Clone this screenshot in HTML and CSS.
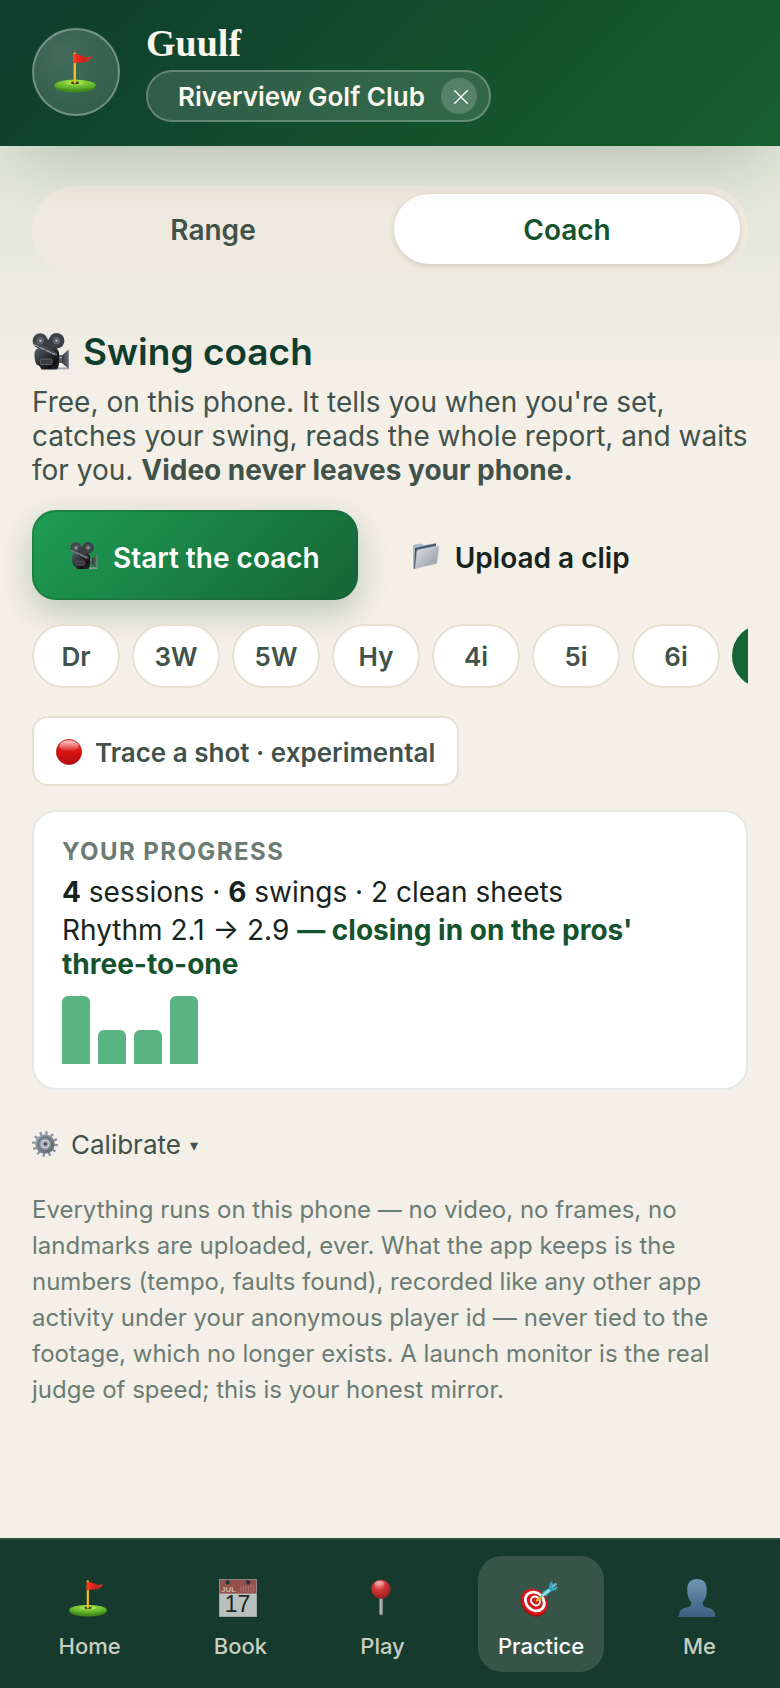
FILE: index.html
```html
<!DOCTYPE html>
<html lang="en">
<head>
    <meta charset="UTF-8">
    <meta name="viewport" content="width=device-width, initial-scale=1.0">
    <title>Guulf</title>
    <link rel="stylesheet" href="styles.css">
</head>
<body>
    <!-- shared icons -->
    <svg class="sprite" aria-hidden="true">
        <defs>
            <linearGradient id="g-flag" x1="0" x2="1">
                <stop offset="0" stop-color="#ff3a24"/>
                <stop offset=".35" stop-color="#e02418"/>
                <stop offset=".6" stop-color="#b52a1c"/>
                <stop offset="1" stop-color="#f02c1c"/>
            </linearGradient>
            <radialGradient id="g-grass" cx=".5" cy=".2" r=".8">
                <stop offset="0" stop-color="#a4e045"/>
                <stop offset=".6" stop-color="#67b92e"/>
                <stop offset="1" stop-color="#3f8a1c"/>
            </radialGradient>
            <linearGradient id="g-cam" x1="0" y1="0" x2="1" y2="1">
                <stop offset="0" stop-color="#56636b"/>
                <stop offset=".4" stop-color="#33363a"/>
                <stop offset=".75" stop-color="#101114"/>
                <stop offset="1" stop-color="#2b2d30"/>
            </linearGradient>
            <linearGradient id="g-lens" x1="0" x2="1">
                <stop offset="0" stop-color="#33363a"/>
                <stop offset="1" stop-color="#646a70"/>
            </linearGradient>
            <linearGradient id="g-folder" x1="0" y1="0" x2="1" y2="1">
                <stop offset="0" stop-color="#dfe3e8"/>
                <stop offset="1" stop-color="#8f959d"/>
            </linearGradient>
            <linearGradient id="g-red" x1="0" y1="0" x2="0" y2="1">
                <stop offset="0" stop-color="#e8504a"/>
                <stop offset=".45" stop-color="#dc1414"/>
                <stop offset="1" stop-color="#b00d0d"/>
            </linearGradient>
            <linearGradient id="g-shine" x1="0" y1="0" x2="0" y2="1">
                <stop offset="0" stop-color="#fff" stop-opacity=".7"/>
                <stop offset="1" stop-color="#fff" stop-opacity="0"/>
            </linearGradient>
            <linearGradient id="g-gear" x1="0" y1="0" x2="1" y2="1">
                <stop offset="0" stop-color="#a3adb8"/>
                <stop offset="1" stop-color="#5d656e"/>
            </linearGradient>
            <radialGradient id="g-pin" cx=".4" cy=".25" r=".8">
                <stop offset="0" stop-color="#f08a84"/>
                <stop offset=".4" stop-color="#cf3636"/>
                <stop offset="1" stop-color="#8f1d1f"/>
            </radialGradient>
            <linearGradient id="g-user" x1="0" y1="0" x2="0" y2="1">
                <stop offset="0" stop-color="#6f96b3"/>
                <stop offset="1" stop-color="#3a5f80"/>
            </linearGradient>
        </defs>

        <symbol id="i-flag" viewBox="0 0 42 42">
            <ellipse cx="21" cy="35.6" rx="20.6" ry="5.8" fill="#3f8a1c"/>
            <ellipse cx="21" cy="34.2" rx="20.6" ry="5.6" fill="url(#g-grass)"/>
            <ellipse cx="21" cy="31.8" rx="9" ry="2.4" fill="#a0dc48"/>
            <ellipse cx="21" cy="31.8" rx="4" ry="1.5" fill="#3d4a18"/>
            <rect x="19.6" y="1.5" width="2.4" height="31" rx="1" fill="#f2c01c"/>
            <path d="M19.6 3q4-.4 8 1.6q5 3 9.7.6q-1.2 5-6 6q-3.3.3-6.7.4q-2.5 0-5 1z" fill="url(#g-flag)"/>
        </symbol>

        <symbol id="i-camera" viewBox="0 0 38 38">
            <path d="M25 34.5h12v1.8H25z" fill="#a2a3b0"/>
            <path d="M26 22h4v8h-4z" fill="#54595e"/>
            <path d="M26 24.5h5" stroke="#a4a9ae" stroke-width="1.2"/>
            <path d="M30 22.5L36 17v18.5L30 30z" fill="url(#g-lens)"/>
            <path d="M36.5 17v18.5" stroke="#85898f"/>
            <path d="M2.5 20Q3 15.5 8 14.5L24 14L27 19V30Q27 34 25 36.5H9.5Q8 32.5 4.5 31.5Q2 27 2.5 20Z" fill="url(#g-cam)"/>
            <circle cx="8.2" cy="7.8" r="7.6" fill="#41464b"/>
            <circle cx="24.6" cy="7.8" r="7.8" fill="#3d4146"/>
            <path d="M8 4q8 5 16.6 0l3 11H12z" fill="#3a3e43"/>
            <circle cx="8.4" cy="7.8" r="3.2" fill="#565c62" stroke="#6f767c" stroke-width=".7"/>
            <circle cx="24.6" cy="7.8" r="3.2" fill="#565c62" stroke="#6f767c" stroke-width=".7"/>
            <circle cx="8.4" cy="7.8" r="1.3" fill="#b4babf"/>
            <circle cx="24.6" cy="7.8" r="1.3" fill="#b4babf"/>
            <path d="M.5 10.5l2.5-1.5L25 20v3.5L21 22z" fill="#4a4f54"/>
            <path d="M1 11.2L23 21.5" stroke="#a2a8ae" stroke-width="1.1" stroke-dasharray="6 1"/>
            <rect x="8.5" y="26" width="11.5" height="5.5" rx="1" fill="#3a3b3e" stroke="#77797c" stroke-width=".7"/>
        </symbol>

        <symbol id="i-folder" viewBox="0 0 28 28">
            <path d="M1 4l1.5-1.5l7-1l2 1.5L24 1v3L4 26.5L1 27z" fill="#aebdca"/>
            <path d="M3 6L24 1.6V8L4 26l-2 1z" fill="#41566a"/>
            <path d="M5 9q0-1 1.2-1.2L26 3.8q1.2-.2 1 1L25 20.5q-.2 1-1.2 1.3L3.2 26.6Z" fill="url(#g-folder)" stroke="#c3c9cf" stroke-width=".6"/>
        </symbol>

        <symbol id="i-dot" viewBox="0 0 26 26">
            <circle cx="13" cy="13" r="12.6" fill="url(#g-red)" stroke="#b51515" stroke-width=".8"/>
            <ellipse cx="13" cy="7" rx="9.5" ry="5.8" fill="url(#g-shine)"/>
        </symbol>

        <symbol id="i-gear" viewBox="0 0 26 26">
            <circle cx="13" cy="13" r="11" fill="none" stroke="#8391a1" stroke-width="3.6" stroke-dasharray="2.2 3.56"/>
            <circle cx="13" cy="13" r="9.8" fill="url(#g-gear)"/>
            <circle cx="13" cy="13" r="7" fill="#868e97" stroke="#596069" stroke-width="1"/>
            <circle cx="13" cy="13" r="4" fill="#a9b1bb" stroke="#d0d6dc" stroke-width="1"/>
            <circle cx="13.5" cy="13" r="1.8" fill="#4c4658"/>
        </symbol>

        <symbol id="i-pin" viewBox="0 0 38 38">
            <path d="M17.3 17h3.6v18.5q-1.8 1.5-3.6 0z" fill="#8f938f"/>
            <path d="M18.3 19h1v16h-1z" fill="#c3c4bf"/>
            <circle cx="19" cy="10.3" r="9.6" fill="url(#g-pin)"/>
            <ellipse cx="17.5" cy="5" rx="5" ry="2.8" fill="url(#g-shine)" opacity=".7"/>
        </symbol>

        <symbol id="i-target" viewBox="0 0 38 38">
            <ellipse cx="13.6" cy="24.5" rx="14.5" ry="11.5" fill="#8f0d10" transform="rotate(45 13.6 24.5)"/>
            <ellipse cx="14.2" cy="23" rx="14.5" ry="12" fill="#d5171b" transform="rotate(45 14.2 23)"/>
            <ellipse cx="14.8" cy="22.5" rx="10.2" ry="8.6" fill="none" stroke="#fff" stroke-width="2.8" transform="rotate(45 14.8 22.5)"/>
            <ellipse cx="15.5" cy="22" rx="4.8" ry="4" fill="#c21a1d" stroke="#fff" stroke-width="2" transform="rotate(45 15.5 22)"/>
            <path d="M16 22l6-4" stroke="#e8b31b" stroke-width="2.4"/>
            <path d="M20 18.5l3.5-6l7-4.5l1.5 3.5l-5.5 5z" fill="#49b9cc"/>
            <path d="M22.5 16.5l7-5.5" stroke="#a4edf2" stroke-width="1.6"/>
            <path d="M29 10.5l.5-6l2.5-2.5l1.5 5l4.5 1.5l-2.5 2.8l-4.5.6z" fill="#36aabd"/>
            <path d="M32.5 7.5l3-3.5M34 7l3-2" stroke="#a9dfe5" stroke-width="1"/>
        </symbol>

        <symbol id="i-user" viewBox="0 0 38 38">
            <path d="M19 0q9.8 0 9.8 11q0 8-4 12q-.8 4.5 3.2 5.2q9.5.8 9.5 9.8H.5q0-9 9.5-9.8q4-.7 3.2-5.2q-4-4-4-12Q9.2 0 19 0z" fill="url(#g-user)"/>
        </symbol>
    </svg>

    <header class="top-bar">
        <div class="crest"><svg><use href="#i-flag"/></svg></div>
        <div class="brand">
            <h1>Guulf</h1>
            <div class="course">
                <span>Riverview Golf Club</span>
                <button class="course-clear" aria-label="Clear course">
                    <svg viewBox="0 0 16 16"><path d="M2 2l12 12M14 2L2 14"/></svg>
                </button>
            </div>
        </div>
    </header>

    <main>
        <div class="segmented">
            <button>Range</button>
            <button class="active">Coach</button>
        </div>

        <section class="coach">
            <h2><svg><use href="#i-camera"/></svg>Swing coach</h2>
            <p class="intro">Free, on this phone. It tells you when you're set, catches your swing, reads the whole report, and waits for you. <strong>Video never leaves your phone.</strong></p>

            <div class="actions">
                <button class="btn primary"><svg><use href="#i-camera"/></svg>Start the coach</button>
                <button class="btn"><svg><use href="#i-folder"/></svg>Upload a clip</button>
            </div>

            <div class="clubs">
                <button>Dr</button>
                <button>3W</button>
                <button>5W</button>
                <button>Hy</button>
                <button>4i</button>
                <button>5i</button>
                <button>6i</button>
                <button class="active" aria-label="7 iron"></button>
            </div>

            <button class="trace"><svg><use href="#i-dot"/></svg>Trace a shot · experimental</button>

            <div class="card">
                <h3>YOUR PROGRESS</h3>
                <p><b>4</b> sessions · <b>6</b> swings · 2 clean sheets</p>
                <p>Rhythm 2.1 → 2.9 <b class="good">— closing in on the pros' three-to-one</b></p>
                <div class="bars">
                    <i style="height: 100%"></i>
                    <i style="height: 50%"></i>
                    <i style="height: 50%"></i>
                    <i style="height: 100%"></i>
                </div>
            </div>

            <button class="calibrate"><svg><use href="#i-gear"/></svg><span>Calibrate <small>▾</small></span></button>

            <p class="privacy">Everything runs on this phone — no video, no frames, no landmarks are uploaded, ever. What the app keeps is the numbers (tempo, faults found), recorded like any other app activity under your anonymous player id — never tied to the footage, which no longer exists. A launch monitor is the real judge of speed; this is your honest mirror.</p>
        </section>
    </main>

    <nav class="tab-bar">
        <a href="#home"><svg><use href="#i-flag"/></svg>Home</a>
        <a href="#book">
            <svg viewBox="0 0 38 38">
                <rect width="38" height="38" fill="#b9c1be"/>
                <path d="M0 0h38v14.5H0z" fill="#96504e"/>
                <path d="M0 14.5h38" stroke="#a77c78" stroke-width=".8"/>
                <path d="M8.5 0v3M27 0l2 3" stroke="#163a2d"/>
                <circle cx="8.5" cy="3.6" r="2" fill="#163a2d"/>
                <circle cx="29.3" cy="3.6" r="2" fill="#163a2d"/>
                <path d="M22 8v5M24.5 7v6M27 7v6M29.5 7v6M32 6v7M34.5 6v7" stroke="#a8706b" stroke-width="1"/>
                <text class="cal-month" x="2" y="12.6">JUL</text>
                <text class="cal-day" x="18.5" y="33" text-anchor="middle">17</text>
                <path d="M.4.4h37.2v37.2H.4z" fill="none" stroke="#8f9c95" stroke-width=".8"/>
            </svg>
            Book
        </a>
        <a href="#play"><svg><use href="#i-pin"/></svg>Play</a>
        <a href="#practice" class="active"><svg><use href="#i-target"/></svg>Practice</a>
        <a href="#me"><svg><use href="#i-user"/></svg>Me</a>
    </nav>
</body>
</html>
```

FILE: styles.css
```css
* {
    margin: 0;
    padding: 0;
    box-sizing: border-box;
}

body {
    min-height: 100vh;
    display: flex;
    flex-direction: column;
    font-family: Inter, "Liberation Sans", sans-serif;
    font-size: 28px;
    line-height: 34px;
    color: #16241d;
    background: #f4efe7 linear-gradient(180deg, #dfe4d6 146px, #f4efe7 390px) no-repeat;
}

button {
    font: inherit;
    color: inherit;
    background: none;
    border: none;
    cursor: pointer;
}

.sprite {
    position: absolute;
    width: 0;
    height: 0;
}

/* header */
.top-bar {
    position: relative;
    z-index: 1;
    display: flex;
    align-items: center;
    gap: 26px;
    padding: 22px 32px 24px;
    background: linear-gradient(135deg, #0f3d2e, #14532d 65%, #166030);
    box-shadow: 0 36px 60px -24px rgba(15, 61, 46, 0.2);
}

.crest {
    display: flex;
    align-items: center;
    justify-content: center;
    width: 88px;
    height: 88px;
    border: 2px solid rgba(255, 255, 255, 0.3);
    border-radius: 50%;
    background: radial-gradient(circle at 35% 30%, rgba(255, 255, 255, 0.22), rgba(255, 255, 255, 0.12));
}

.crest svg {
    width: 42px;
    height: 42px;
    margin-right: 2px;
}

.brand h1 {
    margin-bottom: 6px;
    font-family: "Liberation Serif", serif;
    font-size: 38px;
    line-height: 42px;
    color: #fbf7ee;
}

.course {
    display: flex;
    align-items: center;
    gap: 16px;
    height: 52px;
    padding: 0 12px 0 30px;
    border: 2px solid rgba(255, 255, 255, 0.25);
    border-radius: 26px;
    background: rgba(255, 255, 255, 0.13);
    color: #fbf7ee;
    font-size: 26px;
    font-weight: 600;
}

.course span {
    padding-top: 2px;
}

.course-clear {
    display: flex;
    align-items: center;
    justify-content: center;
    width: 36px;
    height: 36px;
    padding: 2px 0 0 4px;
    border-radius: 50%;
    background: rgba(255, 255, 255, 0.18);
}

.course-clear svg {
    width: 18px;
    height: 18px;
    fill: none;
    stroke: #fff;
    stroke-width: 1.2;
}

main {
    flex: 1;
    padding: 40px 32px;
}

/* range / coach switch */
.segmented {
    display: grid;
    grid-template-columns: 1fr 1fr;
    gap: 8px;
    padding: 8px;
    border-radius: 43px;
    background: #efeadf;
    font-weight: 600;
    color: #41524a;
}

.segmented button {
    height: 70px;
    padding-top: 2px;
    border-radius: 35px;
}

.segmented .active {
    color: #14532d;
    background: #fff;
    box-shadow: 0 2px 6px rgba(60, 40, 10, 0.16);
}

.coach {
    padding-top: 56px;
}

.coach h2 {
    display: flex;
    align-items: center;
    gap: 13px;
    font-size: 37px;
    font-weight: 600;
    line-height: 48px;
    color: #0f3d2e;
}

.coach h2 svg {
    width: 38px;
    height: 38px;
}

.intro {
    margin-top: 9px;
    color: #41524a;
}

.actions {
    display: flex;
    gap: 16px;
    margin-top: 23px;
}

.btn {
    display: flex;
    align-items: center;
    gap: 15px;
    height: 90px;
    padding: 6px 38px 0;
    border-radius: 24px;
    font-weight: 600;
}

.btn svg {
    width: 28px;
    height: 28px;
    margin-bottom: 4px;
}

.btn.primary {
    color: #fff;
    background: linear-gradient(135deg, #1f9d55, #166534);
    box-shadow: inset 0 0 0 2px rgba(22, 101, 52, 0.4), 0 12px 32px rgba(20, 83, 45, 0.25);
}

/* club picker */
.clubs {
    display: flex;
    gap: 12px;
    margin-top: 24px;
    overflow: hidden;
}

.clubs button {
    flex: none;
    width: 88px;
    height: 64px;
    padding-top: 2px;
    border: 2px solid #e8e0d2;
    border-radius: 32px;
    background: #fff;
    color: #41524a;
    font-size: 26px;
    font-weight: 600;
}

.clubs .active {
    border-color: #166534;
    background: #166534;
}

.trace {
    display: flex;
    align-items: center;
    gap: 13px;
    height: 70px;
    margin-top: 28px;
    padding: 4px 22px 0;
    border: 2px solid #e8e0d2;
    border-radius: 16px;
    background: #fff;
    color: #41524a;
    font-size: 26px;
    font-weight: 600;
}

.trace svg,
.calibrate svg {
    width: 26px;
    height: 26px;
    margin-bottom: 2px;
}

/* progress */
.card {
    margin-top: 24px;
    padding: 24px 28px;
    border: 2px solid #e4e9e6;
    border-radius: 24px;
    background: #fff;
}

.card h3 {
    margin-bottom: 7px;
    font-size: 24px;
    font-weight: 700;
    line-height: 32px;
    letter-spacing: 0.06em;
    color: #6b7c74;
}

.card p + p {
    margin-top: 4px;
}

.good {
    color: #14532d;
}

.bars {
    display: flex;
    align-items: flex-end;
    gap: 8px;
    height: 68px;
    margin-top: 15px;
}

.bars i {
    width: 28px;
    border-radius: 6px 6px 0 0;
    background: #5ab482;
}

.calibrate {
    display: flex;
    align-items: center;
    gap: 13px;
    margin-top: 38px;
    font-size: 26px;
    color: #41524a;
}

.calibrate small {
    margin-left: 2px;
    font-size: 16px;
    vertical-align: 3px;
}

.privacy {
    margin-top: 30px;
    font-size: 24px;
    line-height: 36px;
    color: #6b7c74;
}

/* bottom tabs */
.tab-bar {
    display: flex;
    justify-content: space-around;
    padding: 16px 12px;
    border-top: 2px solid #2b4e3f;
    background: #163a2d;
}

.tab-bar a {
    display: flex;
    flex-direction: column;
    align-items: center;
    gap: 13px;
    min-width: 84px;
    height: 116px;
    padding: 23px 20px 0;
    border-radius: 24px;
    font-size: 22px;
    font-weight: 500;
    line-height: 32px;
    color: #c9cec0;
    text-decoration: none;
}

.tab-bar svg {
    width: 42px;
    height: 38px;
    padding-right: 4px;
}

.tab-bar .active {
    color: #fff;
    background: #375649;
}

.cal-month {
    font-family: "Liberation Sans", sans-serif;
    font-size: 8px;
    font-weight: bold;
    fill: #c9b3af;
}

.cal-day {
    font-family: "Liberation Sans", sans-serif;
    font-size: 23px;
    fill: #1d2622;
}
```
